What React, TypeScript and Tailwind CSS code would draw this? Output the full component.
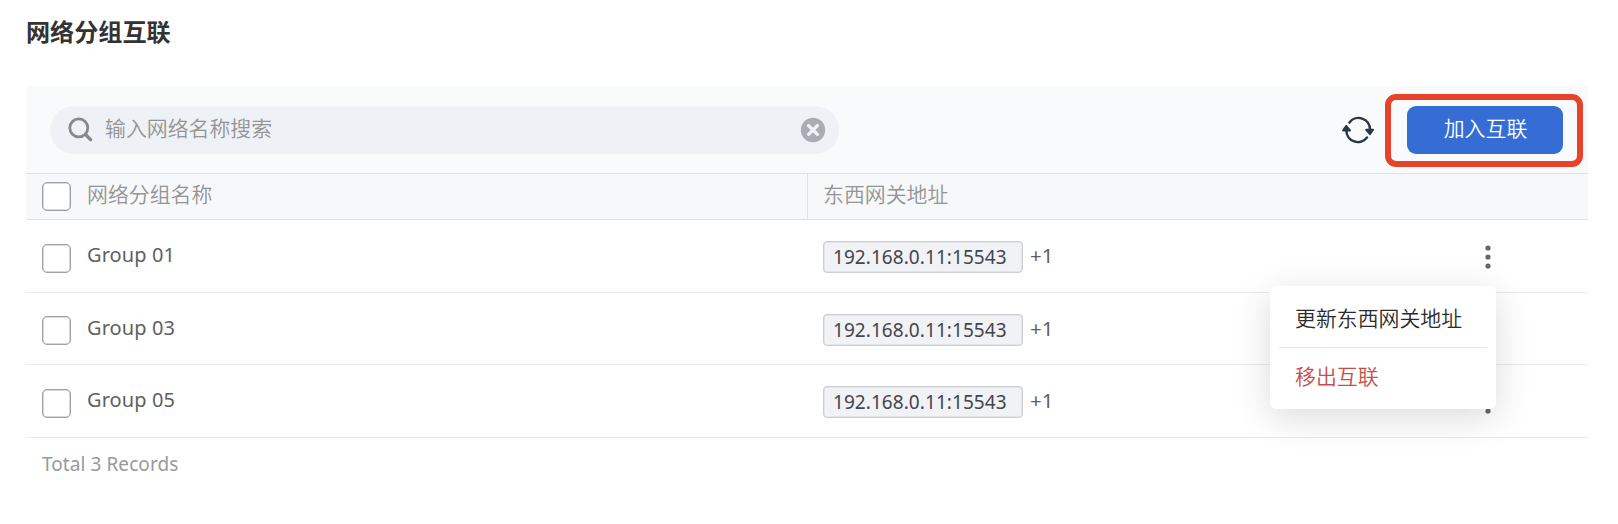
import React from "react";

const groups = [
  { name: "Group 01", address: "192.168.0.11:15543", open: true },
  { name: "Group 03", address: "192.168.0.11:15543", open: false },
  { name: "Group 05", address: "192.168.0.11:15543", open: false },
];

function Checkbox() {
  return (
    <span
      role="checkbox"
      aria-checked="false"
      className="block h-[29px] w-[29px] shrink-0 rounded-[5px] border border-[#9fa0a8] bg-white shadow-[inset_0_0_0_0.5px_#b0b1b8]"
    />
  );
}

function SearchIcon() {
  return (
    <svg width="26" height="26" viewBox="0 0 26 26" fill="none" stroke="#85888c">
      <circle cx="10.8" cy="10.8" r="9" strokeWidth="2.8" />
      <path d="M17.5 17.5 L22.6 22.6" strokeWidth="3.4" strokeLinecap="round" />
    </svg>
  );
}

function ClearIcon() {
  return (
    <svg width="26" height="26" viewBox="0 0 26 26">
      <circle cx="13" cy="13" r="12.2" fill="#a9adb3" />
      <path d="M8.6 8.6 L17.4 17.4 M17.4 8.6 L8.6 17.4" stroke="#eef1f6" strokeWidth="3.4" strokeLinecap="round" />
    </svg>
  );
}

function RefreshIcon() {
  return (
    <svg width="32" height="28" viewBox="0 0 32 28" fill="none" stroke="#2a3744" strokeWidth="2.5" strokeLinecap="round">
      <path d="M7.4 6.4 A11.5 11.5 0 0 1 28 13.5" />
      <path d="M25 21.6 A11.5 11.5 0 0 1 4.4 14.5" />
      <path d="M24.2 13.8 H31 L28 18.2 Z" fill="#2a3744" strokeWidth="2" strokeLinejoin="round" />
      <path d="M1.2 14.4 H8 L4.2 10 Z" fill="#2a3744" strokeWidth="2" strokeLinejoin="round" />
    </svg>
  );
}

function MoreIcon() {
  return (
    <svg width="6" height="24" viewBox="0 0 6 24" fill="#666666">
      <circle cx="3" cy="3" r="2.6" />
      <circle cx="3" cy="12" r="2.6" />
      <circle cx="3" cy="21" r="2.6" />
    </svg>
  );
}

function RowMenu() {
  return (
    <div className="absolute top-[66px] right-[92px] z-10 flex h-[123px] w-[226px] flex-col rounded-[6px] bg-white px-[9px] text-[20.9px] leading-[30px] font-[350] shadow-[0_8px_36px_rgba(0,0,0,0.15)]">
      <button className="flex h-[62px] shrink-0 items-center border-b border-[#e6e7ea] px-[16px] pt-[2px] text-left whitespace-nowrap text-[#2b2b2b]">
        更新东西网关地址
      </button>
      <button className="flex h-[56px] items-center px-[16px] text-left text-[#c94d49]">移出互联</button>
    </div>
  );
}

export default function App() {
  return (
    <main className="h-[524px] w-[1618px] overflow-hidden bg-white pt-[14px] pr-[30px] pl-[26px] font-['Noto_Sans','Noto_Sans_CJK_SC',sans-serif] text-[#5f5f5f]">
      <h1 className="text-[24.1px] leading-9 font-bold text-[#333333]">网络分组互联</h1>
      <section className="mt-9">
        <div className="flex h-[88px] items-center justify-between border-b border-[#e0e1e6] bg-[#f9fafc] pr-[25px] pl-6">
          <div className="flex h-12 w-[789px] items-center rounded-full bg-[#eef1f6] pr-[13px] pl-[18px]">
            <SearchIcon />
            <span className="ml-[11px] flex-1 pb-[3px] text-[20.9px] leading-[30px] font-[350] text-[#949494]">输入网络名称搜索</span>
            <ClearIcon />
          </div>
          <div className="flex items-center gap-[33px]">
            <RefreshIcon />
            <div className="relative">
              <button className="flex h-12 w-[156px] items-center justify-center rounded-[9px] bg-[#356dd4] pb-[3px] pl-px text-[20.9px] leading-[30px] font-[350] text-white">
                加入互联
              </button>
              <div className="pointer-events-none absolute -top-[12px] -right-[20px] -bottom-[13px] -left-[22px] rounded-[11px] border-[6px] border-[#e8432a]" />
            </div>
          </div>
        </div>
        <div className="flex h-[46px] border-b border-[#dfe0e5] bg-[#f7f8fa] text-[20.9px] leading-[30px] font-[350] text-[#949494]">
          <div className="flex w-[782px] items-center border-r border-[#dfe0e5] pb-px pl-4">
            <Checkbox />
            <span className="ml-[16px] pb-[4px]">网络分组名称</span>
          </div>
          <div className="flex items-center pb-[5px] pl-[15px]">东西网关地址</div>
        </div>
        {groups.map((group) => (
          <div key={group.name} className="relative flex h-[72.5px] items-center border-b border-[#e9eaed] text-[20px] leading-7">
            <div className="flex w-[797px] items-center pl-4">
              <div className="pt-[5px]">
                <Checkbox />
              </div>
              <span className="ml-[16px] pb-px tracking-[0.1px]">{group.name}</span>
            </div>
            <div className="flex flex-1 items-center">
              <div className="mt-[3px] flex h-8 w-[200px] items-center rounded-[4px] border border-[#cdced7] bg-[#f1f2f6] pl-[9px] text-[19px] tracking-[0.06px] text-[#43464b] shadow-[inset_0_0_0_0.5px_#d5d6de]">
                {group.address}
              </div>
              <span className="ml-[7px] pb-px text-[20.5px]">+1</span>
            </div>
            <div className="mr-[97px] pt-[3px]">
              <MoreIcon />
            </div>
            {group.open && <RowMenu />}
          </div>
        ))}
        <footer className="pt-[12px] pl-4 text-[19px] leading-7 tracking-[0.07px] text-[#999999]">Total 3 Records</footer>
      </section>
    </main>
  );
}
